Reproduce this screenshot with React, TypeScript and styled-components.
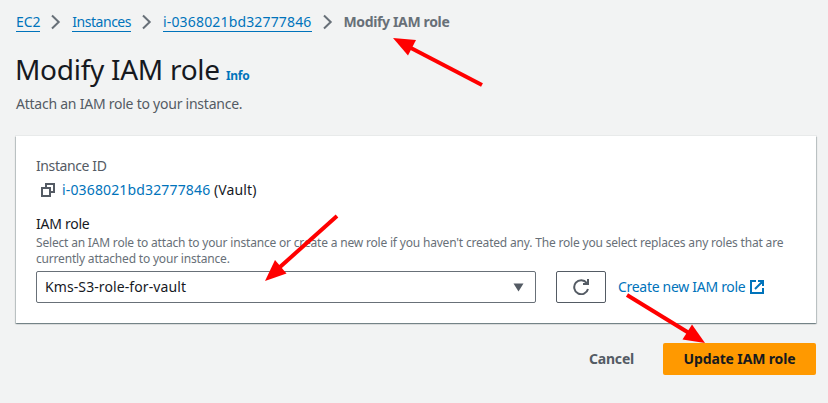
import React from 'react';
import styled, { createGlobalStyle } from 'styled-components';

const GlobalStyle = createGlobalStyle`
  * { box-sizing: border-box; }
  body {
    margin: 0;
    background: #f2f3f3;
    color: #16191f;
    font: 400 14px/22px "Noto Sans", "Open Sans", sans-serif;
  }
`;

const Page = styled.main`
  position: relative;
  width: 828px;
  height: 403px;
  padding: 12px 12px 0 16px;
  overflow: hidden;
  white-space: nowrap;
`;

const Breadcrumbs = styled.nav`
  display: flex;
  height: 20px;
  line-height: 19px;
`;

const Crumb = styled.a<{ $tracking: number }>`
  color: #0073bb;
  border-bottom: 1px solid #0073bb;
  letter-spacing: ${(p) => p.$tracking}px;
`;

const CurrentCrumb = styled.span`
  color: #687078;
  font-weight: 700;
  letter-spacing: -0.36px;
`;

const Separator = styled.svg`
  flex: none;
  width: 16px;
  height: 16px;
  margin: 2px 8px 0;
  fill: none;
  stroke: #687078;
  stroke-width: 2;
`;

const Heading = styled.header`
  display: flex;
  align-items: baseline;
  height: 36px;
  margin-top: 19px;
`;

const Title = styled.h1`
  margin: 0 0 0 -1px;
  width: 211px;
  font-size: 28px;
  font-weight: 400;
  line-height: 36px;
  letter-spacing: -0.28px;
`;

const InfoLink = styled.a`
  color: #0073bb;
  font-size: 12px;
  font-weight: 700;
  letter-spacing: -0.3px;
`;

const Description = styled.p`
  margin: 6px 0 21px;
  color: #545b64;
  letter-spacing: -0.24px;
`;

const Card = styled.section`
  width: 800px;
  height: 187px;
  padding: 19px 20px 0;
  background: #fff;
  box-shadow: 0 1px 1px 0 rgba(0, 28, 36, 0.3), 1px 1px 1px 0 rgba(0, 28, 36, 0.15),
    -1px 1px 1px 0 rgba(0, 28, 36, 0.15), 0 0 0 1px rgba(0, 28, 36, 0.04);
`;

const Label = styled.div<{ $muted?: boolean }>`
  color: ${(p) => (p.$muted ? '#545b64' : '#16191f')};
  letter-spacing: ${(p) => (p.$muted ? -0.4 : -0.25)}px;
`;

const InstanceValue = styled.div`
  display: flex;
  margin: 2px 0 12px;
  padding-left: 4px;
`;

const CopyIcon = styled.svg`
  width: 16px;
  height: 16px;
  margin: 3px 6px 0 0;
  fill: none;
  stroke: #545b64;
  stroke-width: 2;
`;

const InstanceLink = styled.a`
  width: 152px;
  color: #0073bb;
  letter-spacing: 0.15px;
`;

const InstanceName = styled.span`
  letter-spacing: 0.12px;
`;

const Hint = styled.p`
  margin: 0 0 4px;
  color: #687078;
  font-size: 12px;
  line-height: 16px;
  letter-spacing: -0.185px;
`;

const Controls = styled.div`
  display: flex;
  align-items: center;
`;

const Select = styled.div`
  display: flex;
  align-items: center;
  justify-content: space-between;
  width: 500px;
  height: 32px;
  padding: 0 11px 0 8px;
  border: 1px solid #687078;
  border-radius: 2px;
  letter-spacing: 0.1px;
`;

const Caret = styled.svg`
  width: 11px;
  height: 9px;
  fill: #545b64;
`;

const RefreshButton = styled.button`
  display: flex;
  align-items: center;
  justify-content: center;
  width: 50px;
  height: 32px;
  margin: 0 12px 0 20px;
  padding: 0;
  background: #fff;
  border: 1px solid #545b64;
  border-radius: 2px;
`;

const RefreshIcon = styled.svg`
  width: 16px;
  height: 16px;
  fill: none;
  stroke: #545b64;
  stroke-width: 2;
`;

const CreateLink = styled.a`
  display: flex;
  align-items: center;
  color: #0073bb;
  letter-spacing: -0.3px;
`;

const CreateText = styled.span`
  width: 131px;
`;

const ExternalIcon = styled.svg`
  width: 16px;
  height: 16px;
  fill: none;
  stroke: #0073bb;
  stroke-width: 2;
`;

const Actions = styled.footer`
  display: flex;
  justify-content: flex-end;
  width: 800px;
  margin-top: 20px;
`;

const Button = styled.button<{ $primary?: boolean }>`
  height: 32px;
  width: ${(p) => (p.$primary ? 153 : 103)}px;
  padding: 0;
  border: 0;
  border-radius: 2px;
  background: ${(p) => (p.$primary ? '#ff9900' : 'transparent')};
  color: ${(p) => (p.$primary ? '#16191f' : '#545b64')};
  font: inherit;
  font-weight: 700;
  letter-spacing: ${(p) => (p.$primary ? -0.14 : -0.2)}px;
`;

const Annotations = styled.svg`
  position: absolute;
  inset: 0;
  pointer-events: none;
  stroke: #ff0000;
  stroke-width: 4;
  fill: #ff0000;
`;

const Chevron = () => (
  <Separator viewBox="0 0 16 16">
    <path d="m4 1.5 6.7 6.5L4 14.5" />
  </Separator>
);

export default function App() {
  return (
    <>
      <GlobalStyle />
      <Page>
        <Breadcrumbs>
          <Crumb $tracking={-0.1}>EC2</Crumb>
          <Chevron />
          <Crumb $tracking={-0.48}>Instances</Crumb>
          <Chevron />
          <Crumb $tracking={0.16}>i-0368021bd32777846</Crumb>
          <Chevron />
          <CurrentCrumb>Modify IAM role</CurrentCrumb>
        </Breadcrumbs>
        <Heading>
          <Title>Modify IAM role</Title>
          <InfoLink>Info</InfoLink>
        </Heading>
        <Description>Attach an IAM role to your instance.</Description>
        <Card>
          <Label $muted>Instance ID</Label>
          <InstanceValue>
            <CopyIcon viewBox="0 0 16 16">
              <path d="M2 6h8v8H2zM6 6V2h8v8h-4" />
            </CopyIcon>
            <InstanceLink>i-0368021bd32777846</InstanceLink>
            <InstanceName>(Vault)</InstanceName>
          </InstanceValue>
          <Label>IAM role</Label>
          <Hint>
            Select an IAM role to attach to your instance or create a new role if you haven't created any. The role you
            select replaces any roles that are
            <br />
            currently attached to your instance.
          </Hint>
          <Controls>
            <Select>
              Kms-S3-role-for-vault
              <Caret viewBox="0 0 11 9">
                <path d="M0.5 0.5h10L5.5 8.5z" />
              </Caret>
            </Select>
            <RefreshButton aria-label="Refresh">
              <RefreshIcon viewBox="0 0 16 16">
                <path d="M15 10a7 7 0 1 1-1.2-6l1.2 1.4M10 5h5V0" />
              </RefreshIcon>
            </RefreshButton>
            <CreateLink>
              <CreateText>Create new IAM role</CreateText>
              <ExternalIcon viewBox="0 0 16 16">
                <path d="M7 2H2v12h12V9M9 2h5v5M14 2 6 10" />
              </ExternalIcon>
            </CreateLink>
          </Controls>
        </Card>
        <Actions>
          <Button>Cancel</Button>
          <Button $primary>Update IAM role</Button>
        </Actions>
        <Annotations width="828" height="403" viewBox="0 0 828 403">
          <path d="M482 85 410 47.5" />
          <path stroke="none" d="m393 38 23 2-8 15.500z" />
          <path d="m337 216-57 51" />
          <path stroke="none" d="m265 281 10-21 11.500 13.500z" />
          <path d="m627 295 62 38" />
          <path stroke="none" d="m705 343-22.500-3.500 9.500-15z" />
        </Annotations>
      </Page>
    </>
  );
}
